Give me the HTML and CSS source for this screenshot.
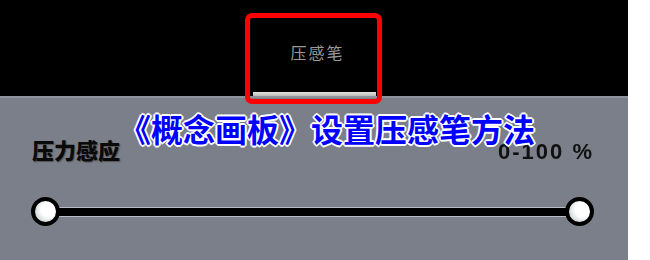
FILE: index.html
```html
<!DOCTYPE html>
<html lang="zh-CN">
<head>
    <meta charset="UTF-8">
    <title>概念画板 压感笔</title>
    <link rel="stylesheet" href="styles.css">
</head>
<body>
    <div class="screen">
        <div class="top-bar">
            <div class="tab">
                <span class="tab-label">压感笔</span>
                <span class="tab-line"></span>
            </div>
        </div>
        <div class="panel">
            <div class="row">
                <span class="label">压力感应</span>
                <span class="range">0-100 %</span>
            </div>
            <div class="slider">
                <span class="knob"></span>
                <span class="track"></span>
                <span class="knob"></span>
            </div>
        </div>
        <div class="highlight"></div>
        <div class="caption">《概念画板》设置压感笔方法</div>
    </div>
</body>
</html>
```

FILE: styles.css
```css
body {
    margin: 0;
    padding: 0;
    background-color: white;
    font-family: "Noto Sans CJK SC", "Liberation Sans", sans-serif;
    width: 650px;
    height: 260px;
    overflow: hidden;
}

.screen {
    position: relative;
    width: 628px;
    height: 260px;
    display: flex;
    flex-direction: column;
}

.top-bar {
    background-color: #000;
    height: 96px;
    display: flex;
    justify-content: center;
}

.tab {
    width: 123px;
    margin-left: 1px;
    display: flex;
    flex-direction: column;
    align-items: center;
    justify-content: flex-end;
}

.tab-label {
    color: #9a9a9a;
    font-size: 16px;
    letter-spacing: 2px;
    margin-bottom: 28px;
    margin-left: 6px;
}

.tab-line {
    width: 100%;
    height: 6px;
    background: linear-gradient(#e2e2de, #a9a9a6);
    margin-bottom: -2px;
}

.panel {
    flex: 1;
    background-color: #7b7f8a;
    border-top: 2px solid #8e929b;
    padding: 36px 34px 0 31px;
}

.row {
    display: flex;
    justify-content: space-between;
    align-items: center;
    height: 30px;
}

.label {
    font-size: 22px;
    font-weight: 900;
    color: #0a0a0a;
    margin-left: 1px;
    text-shadow: 1px 1px 1px #555;
}

.range {
    font-family: "Liberation Sans", sans-serif;
    font-size: 22px;
    font-weight: bold;
    color: #111;
    letter-spacing: 2px;
    margin-top: 5px;
    filter: blur(0.4px);
}

.slider {
    display: flex;
    align-items: center;
    margin-top: 33px;
}

.track {
    flex: 1;
    height: 8px;
    background-color: #000;
    border-top: 1px solid #b8bcc4;
    border-bottom: 1px solid #b8bcc4;
    margin: 0 -3px;
}

.knob {
    width: 21px;
    height: 21px;
    border: 4px solid #000;
    border-radius: 50%;
    background: radial-gradient(circle at 65% 40%, #ffffff 40%, #cfd9d9 75%);
    position: relative;
    z-index: 1;
}

.highlight {
    position: absolute;
    left: 245px;
    top: 13px;
    width: 127px;
    height: 81px;
    border: 5px solid #ff0000;
    border-radius: 7px;
}

.caption {
    position: absolute;
    left: 119px;
    top: 105px;
    font-size: 32px;
    font-weight: bold;
    color: #0000ff;
    white-space: nowrap;
    text-shadow: 2px 0 0 #fff, -2px 0 0 #fff, 0 2px 0 #fff, 0 -2px 0 #fff,
                 1px 1px 0 #fff, -1px -1px 0 #fff, 1px -1px 0 #fff, -1px 1px 0 #fff;
}
```
